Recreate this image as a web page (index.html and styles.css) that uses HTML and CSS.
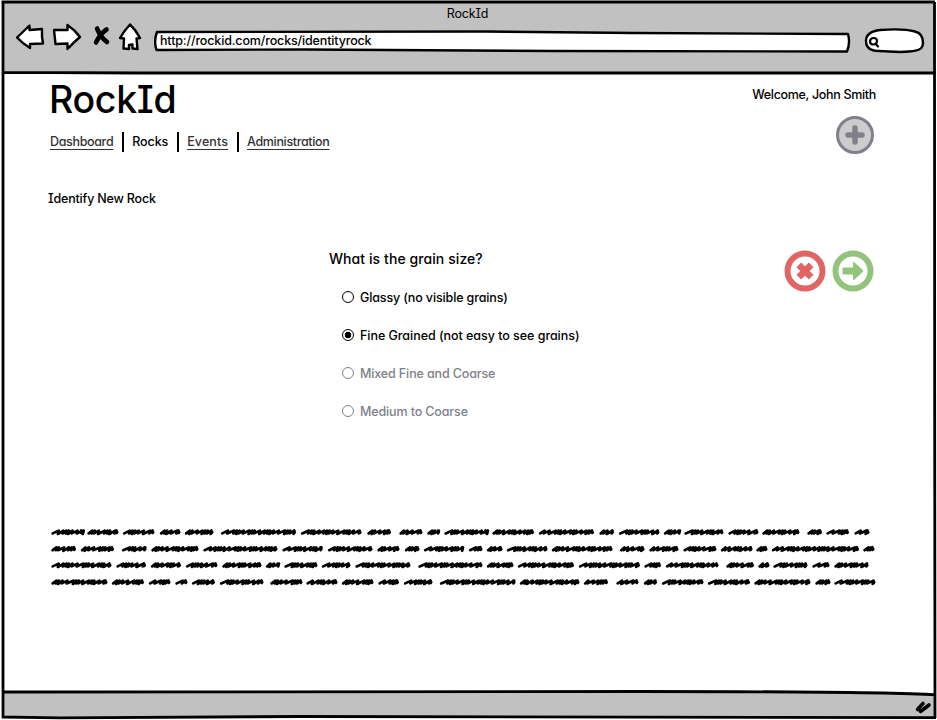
FILE: index.html
```html
<!DOCTYPE html>
<html lang="en">
<head>
<meta charset="utf-8">
<title>RockId</title>
<link rel="stylesheet" href="styles.css">
</head>
<body>
<div class="window">
  <svg class="frame" viewBox="0 0 937 720" aria-hidden="true">
    <path class="chrome" d="M3 2H935V73H3Z"/>
    <path class="chrome" d="M3 692Q400 691 640 691.5T935 695V717L3 717.5Z"/>
    <path class="edge" d="M1.5 2H935M3 2C1.5 120 1.5 400 3 718M934.500 2C936 200 933.500 500 935 718M3 72.300L140 73H936M2 692Q400 691.500 640 691.500T936 694.800M2 717L60 717.800L300 716.500L936 717.600"/>
    <path class="grip" d="M917.500 709.500L923 703.500M920.500 711.500L929 705"/>
  </svg>

  <header class="browser">
    <div class="browser-title">RockId</div>
    <div class="toolbar">
      <svg class="nav-icons" width="130" height="34" viewBox="14 20 130 34">
        <path class="ink" d="M17 37.500L29.500 25.500V30L42 29Q41.500 37 43 43.500L30 44V48Q22 43 17 37.500Z"/>
        <path class="ink" d="M54 30L67.500 30V25Q75 30 80 37Q74 42 67.500 49V43.500L55.500 44Z"/>
        <path class="cross" d="M97 28.500Q101 38 107 42M106.500 29.500Q100 34 96 42.500"/>
        <path class="ink" d="M130 24.500Q136 30 140 38L136.500 38.500L137.500 49L132.500 48.500V44.500L129 45V49L123.500 48.500L124 38.500L120 38Q124 31 130 24.500Z"/>
      </svg>
      <div class="address">
        <svg class="address-shape" viewBox="0 0 698 24" aria-hidden="true">
          <path class="ink" d="M3 3L330 2.500L480 4L694 5Q696.500 14 693 22.500L400 22L150 20.500L2.500 21Q-.5 12 3 3Z"/>
        </svg>
        <span class="url">http://rockid.com/rocks/identityrock</span>
      </div>
      <svg class="search" width="64" height="30" viewBox="862 26 64 30">
        <path class="ink" d="M866 41C866 34 871 31 880 30C893 29 906 29 915 31.500C922 33 923 39 923 43C922.500 50 918 50.500 909 51.500C898 53 888 51 879 51C870 51 866 48 866 41Z"/>
        <path class="lens" d="M873.500 38Q877 38 877 41Q876.800 44.500 873 44.500Q869.800 44.200 870 41Q870.500 38 873.500 38M875.500 43.500L878 46.500"/>
      </svg>
    </div>
  </header>

  <main class="page">
    <div class="masthead">
      <div class="brand">
        <h1>RockId</h1>
        <nav>
          <a href="#">Dashboard</a>
          <a class="current" href="#">Rocks</a>
          <a class="events" href="#">Events</a>
          <a href="#">Administration</a>
        </nav>
      </div>
      <div class="account">
        <span class="welcome">Welcome, John Smith</span>
        <svg class="add" width="40" height="40" viewBox="0 0 40 40">
          <circle cx="20" cy="20" r="17.500"/>
          <path d="M20 13V27M13 20H27"/>
        </svg>
      </div>
    </div>

    <h2>Identify New Rock</h2>

    <section class="wizard">
      <div class="question">
        <h3>What is the grain size?</h3>
        <ul>
          <li><span class="radio"></span><span class="label">Glassy (no visible grains)</span></li>
          <li><span class="radio checked"></span><span class="label wide">Fine Grained (not easy to see grains)</span></li>
          <li class="disabled"><span class="radio"></span><span class="label">Mixed Fine and Coarse</span></li>
          <li class="disabled"><span class="radio"></span><span class="label">Medium to Coarse</span></li>
        </ul>
      </div>
      <div class="actions">
        <svg width="42" height="42" viewBox="0 0 42 42">
          <circle class="ring red" cx="21" cy="21" r="17.500"/>
          <path class="x-mark" d="M14.800 14.800L27.200 27.200M27.200 14.800L14.800 27.200"/>
        </svg>
        <svg width="42" height="42" viewBox="0 0 42 42">
          <circle class="ring green" cx="21" cy="21" r="17.500"/>
          <path class="arrow" d="M11.500 17.500H21V12.500Q21 11.500 22 12L31 20.200Q31.700 21 31 21.800L22 30Q21 30.500 21 29.500V24.500H11.500Q10.500 24.500 10.500 23.500V18.500Q10.500 17.500 11.500 17.500Z"/>
        </svg>
      </div>
    </section>

    <svg class="scribble" width="830" height="64" viewBox="50 524 830 64" aria-hidden="true"></svg>
  </main>
</div>
<script src="scribble.js"></script>
</body>
</html>
```
FILE: styles.css
```css
* { box-sizing: border-box; }
body {
  margin: 0;
  background: #fff;
  color: #000;
  font: 500 12.5px/20px Inter, "Liberation Sans", sans-serif;
  font-feature-settings: "cv11", "cv08";
  font-synthesis: none;
}
.window { position: relative; width: 937px; height: 720px; overflow: hidden; }
.frame { position: absolute; inset: 0; z-index: -1; width: 937px; height: 720px; }
.chrome { fill: #c1c1c1; }
.edge { fill: none; stroke: #000; stroke-width: 2.8; }
.grip { stroke: #000; stroke-width: 3.6; stroke-linecap: round; }
.ink { fill: #fff; stroke: #000; stroke-width: 2.4; stroke-linejoin: round; }
.cross { fill: none; stroke: #000; stroke-width: 4.6; stroke-linecap: round; }
.lens { fill: none; stroke: #000; stroke-width: 2.2; stroke-linecap: round; }

.browser { height: 74px; }
.browser-title { padding-top: 4px; padding-right: 2px; height: 20px; text-align: center; letter-spacing: -.2px; font-weight: 400; }
.toolbar { display: flex; padding-left: 14px; }
.nav-icons { flex: none; }
.address { position: relative; flex: none; width: 698px; height: 26px; margin: 9px 0 0 9px; padding: 2px 0 0 7px; }
.address-shape { position: absolute; left: 1px; top: 0; width: 698px; height: 24px; }
.url { position: relative; letter-spacing: -.15px; }
.search { flex: none; margin: 6px 0 0 11px; }

.page { padding: 0 62px 0 50px; }
.masthead { display: flex; justify-content: space-between; height: 96px; }
h1, h2, h3 { margin: 0; font-weight: 500; }
h1 { font-size: 37.5px; line-height: 51px; letter-spacing: -.3px; margin-left: -1px; }
nav { display: flex; margin-top: 7px; }
nav a { height: 20px; color: #333; text-decoration: none; white-space: nowrap; letter-spacing: -.34px; }
nav a + a { margin-left: 9px; padding-left: 8px; border-left: 2px solid #000; }
nav a:not(.current) { text-decoration: underline; text-underline-offset: 3px; text-decoration-thickness: 1px; }
nav .current { color: #000; letter-spacing: -.1px; }
nav .events { letter-spacing: .1px; }
.account { display: flex; flex-direction: column; align-items: flex-end; padding-top: 11px; width: 200px; }
.welcome { margin-right: -1px; white-space: nowrap; letter-spacing: -.32px; }
.add { margin-top: 10px; }
.add circle { fill: #ccc; stroke: #80808a; stroke-width: 3; }
.add path { stroke: #80808a; stroke-width: 5.5; stroke-linecap: round; }
h2 { margin: 19px 0 0 -2px; height: 18px; font-size: 12.5px; line-height: 20px; letter-spacing: -.18px; }

.wizard { display: flex; justify-content: space-between; margin-top: 42px; padding-left: 280px; height: 275px; }
h3 { font-size: 14px; line-height: 20px; margin-left: -1px; letter-spacing: .08px; }
ul { list-style: none; margin: 19px 0 0 12px; padding: 0; display: grid; gap: 20px; }
li { display: flex; align-items: center; gap: 6px; height: 18px; white-space: nowrap; letter-spacing: -.13px; }
.label { padding-top: 2px; }
.wide { letter-spacing: -.04px; }
.radio { width: 12px; height: 12px; border: 1.5px solid #000; border-radius: 50%; }
.checked { background: radial-gradient(circle, #000 3px, transparent 3.6px); }
.disabled { color: #80808a; }
.disabled .radio { border-color: #80808a; }
.actions { display: flex; gap: 6px; margin-right: 1px; padding-top: 1px; }
.ring { fill: none; stroke-width: 6; }
.red { stroke: #e06666; }
.green { stroke: #93c47d; }
.x-mark { stroke: #e06666; stroke-width: 6.6; stroke-linecap: butt; }
.arrow { fill: #93c47d; }
.scribble { display: block; }
.scribble path { fill: none; stroke: #000; stroke-width: 2.7; stroke-linecap: round; stroke-linejoin: round; }
```
FILE: scribble.js
```js
// Start and end of each scribbled word, by row.
const rows = [
  [532, "51.5-83 87.5-118.5 123-154.5 160-180.5 185-213.5 221-296 301-361.5 367.5-391 399.5-422.5 427.5-440 444.5-487.5 492.5-534 539-594 599.5-614 619-659.5 664-680.5 684.5-723.5 728.5-758.5 762.5-799.5 807.5-822 826.5-849 854.5-869.5"],
  [548.8, "51.5-76 81-114 122-146.5 151.5-198.5 203.5-277.5 282.5-322.5 328-372.5 377.5-399.5 405-419.5 424-464 469-482.5 487-502.5 507-547.5 552-612.5 620-644.5 649.5-678.5 683.5-716.5 721-752.5 756.5-767.5 772-859 863.5-874.5"],
  [565, "51.5-111.5 116.5-146 151-181 186-217.5 222.5-261.5 266-279.5 284.5-317.5 322-350.5 355.5-410.5 418.5-482.5 487-513.5 518-574 579-640 644.5-661 666-718.5 726.5-754 758.5-769.5 773.5-807.5 812.5-829.5 834.5-868.5"],
  [582, "51.5-107.5 112-144 149-170.5 175.5-187.5 192-215 220-263.5 270.5-302.5 306.5-337.5 342-373.5 378.5-399 404-432.5 440-515.5 520-579.5 584-608 616.5-638.5 644-657 662-703.5 708-750 754.5-810.5 815.5-830.5 834.5-875.5"]
];
const steps = [5.2, 4.8, 3, 2.4, 3.6, 5, 6.2, 2.8, 2.4, 4.2, 5.8, 3, 2.4];
let n = 0, d = "";
for (const [y, words] of rows) {
  for (const word of words.split(" ")) {
    const [a, b] = word.split("-").map(Number);
    let x = a + 1.2;
    d += `M${x} ${y + 1.4}`;
    while (x < b - 6) {
      const s = steps[n % steps.length];
      const drop = n++ % 3 ? 1.4 : 2;
      d += `L${(x + s + .8).toFixed(1)} ${y - 1.4}L${(x + s).toFixed(1)} ${y + drop}`;
      x += s;
    }
    d += `L${b - 2} ${y - 1.5}L${b - 1.8} ${y + 1}L${b - 1.3} ${y + .3}`;
  }
}
const path = document.createElementNS("http://www.w3.org/2000/svg", "path");
path.setAttribute("d", d);
document.querySelector(".scribble").append(path);
```
